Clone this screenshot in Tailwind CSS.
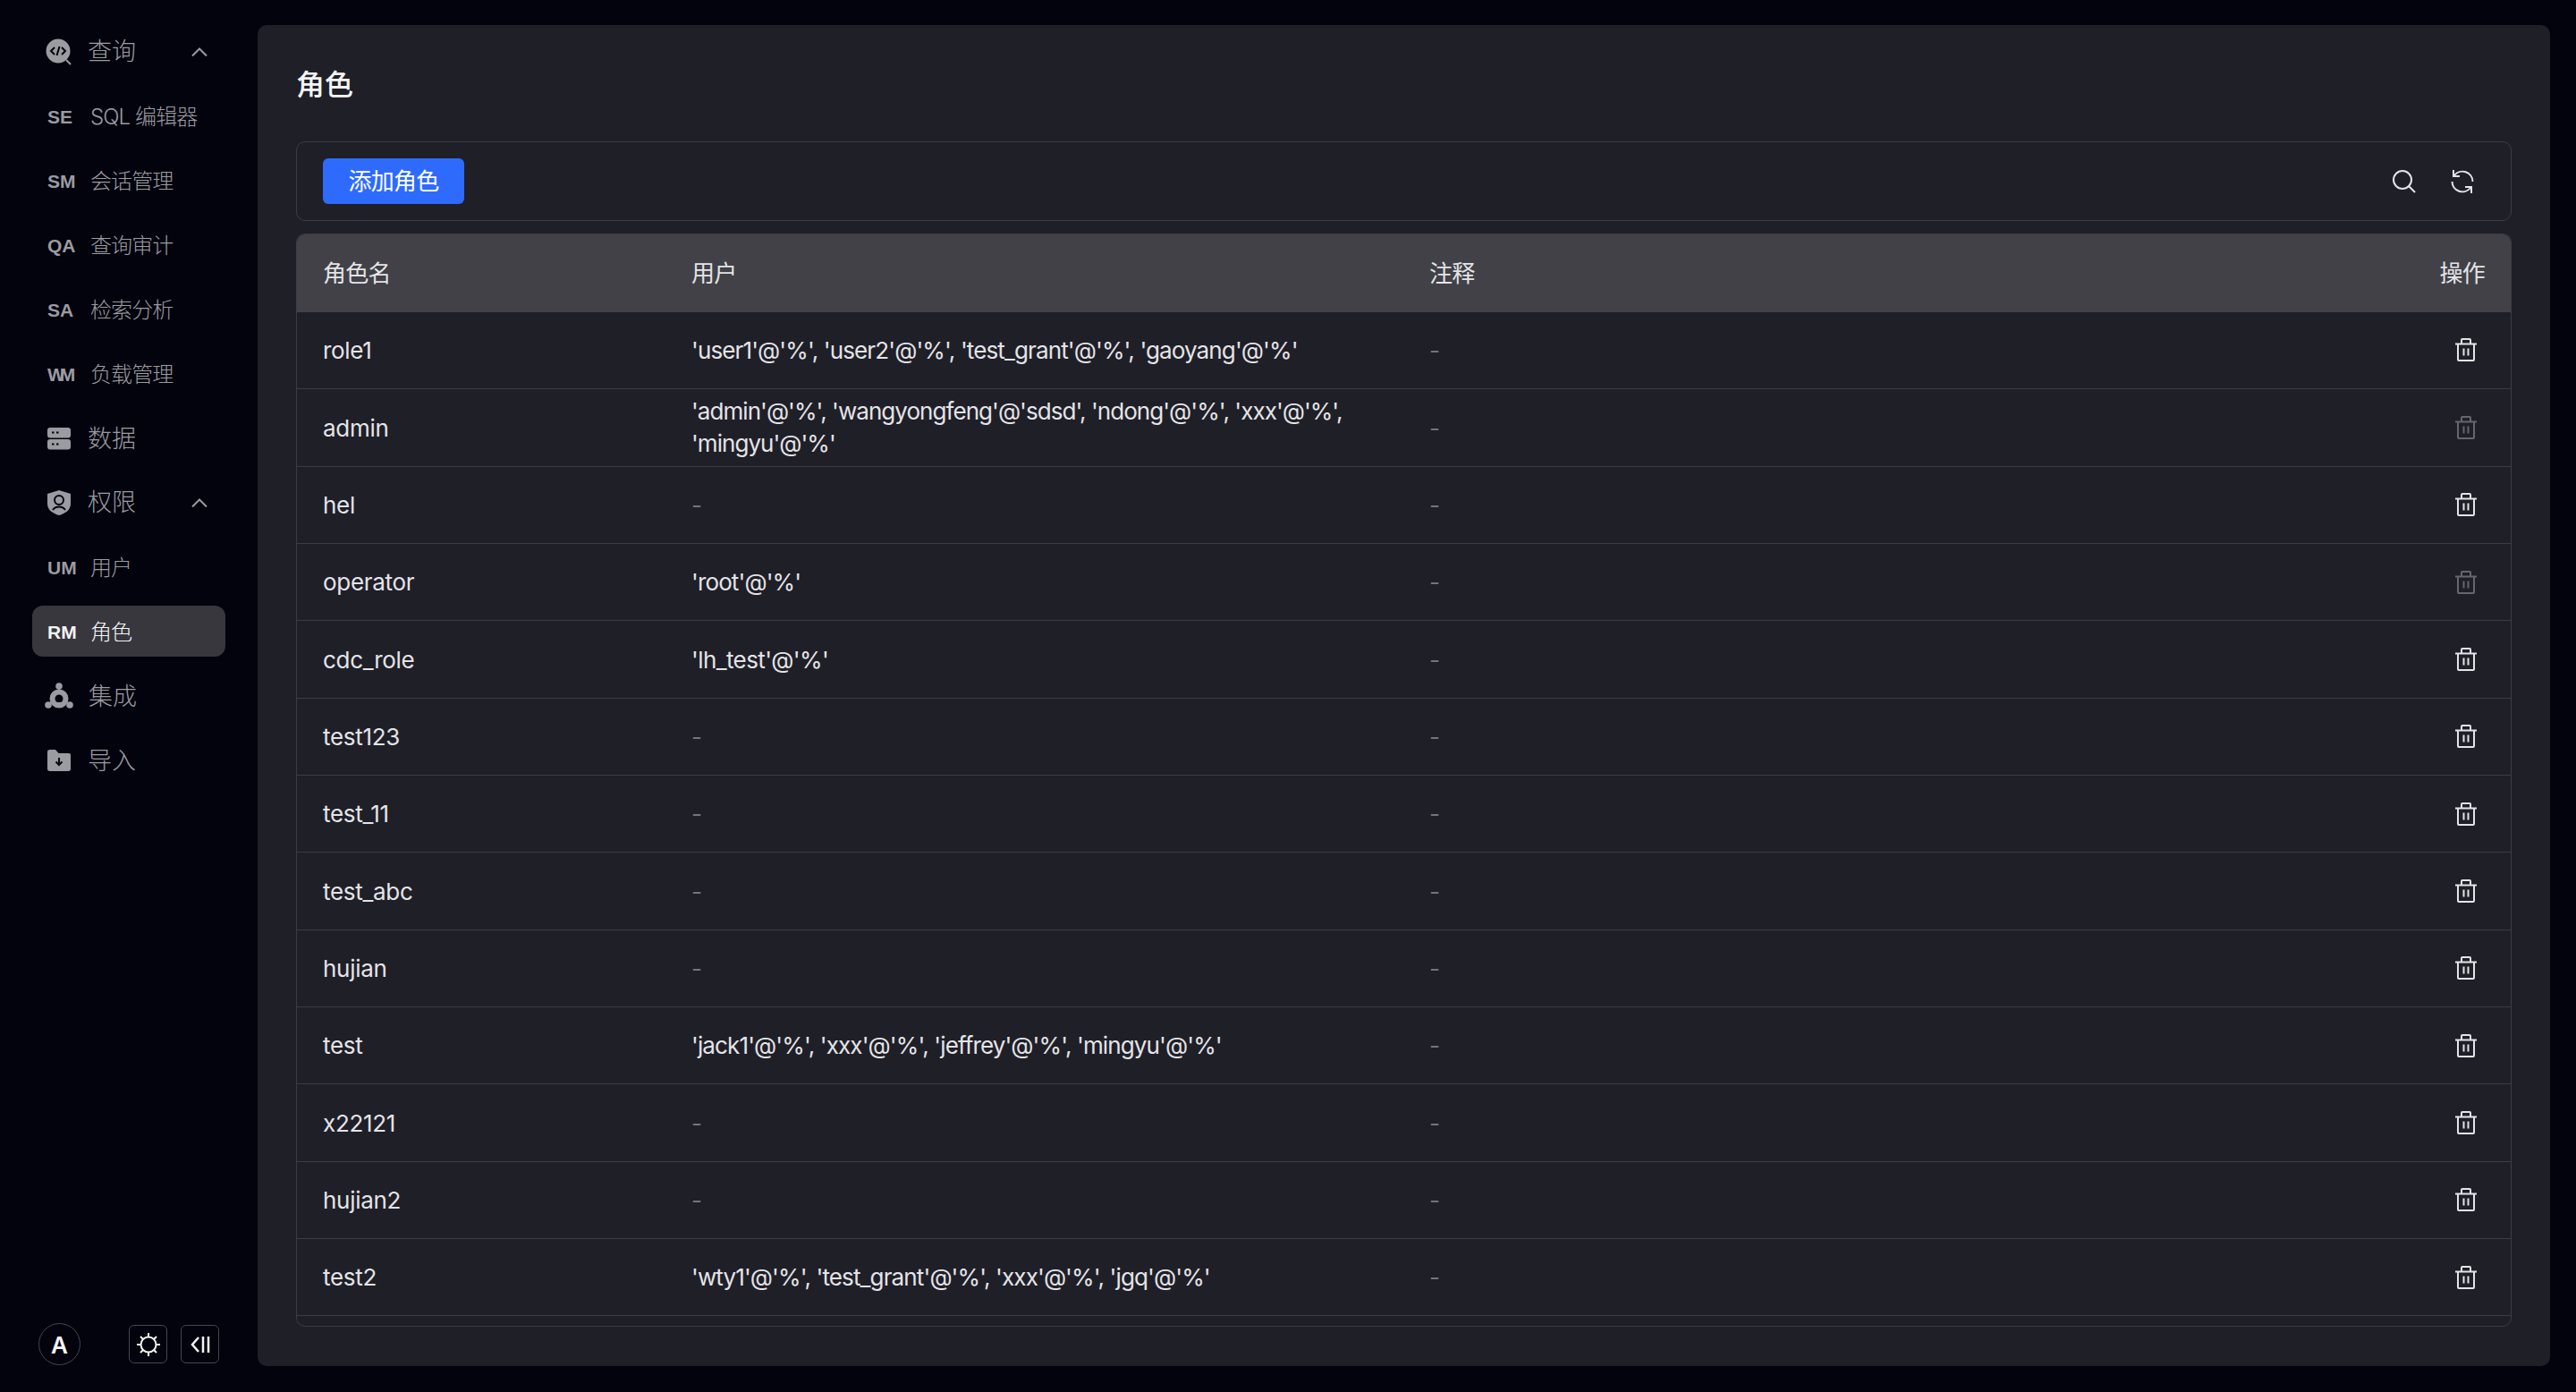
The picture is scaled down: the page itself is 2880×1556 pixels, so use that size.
<!doctype html>
<html lang="zh-CN">
<head>
<meta charset="utf-8">
<script src="https://cdn.jsdelivr.net/npm/@tailwindcss/browser@4"></script>
<title>角色</title>
</head>
<body class="bg-[#03030d] font-['Inter','Noto_Sans_CJK_SC',sans-serif] text-[26px] text-[#e4e4e7] w-[2880px] h-[1556px] overflow-hidden">
<div class="flex h-[1556px]">
  <aside class="w-[288px] shrink-0 pl-[36px] pt-[29px] pb-[30px] flex flex-col justify-between">
    <nav class="w-[216px] flex flex-col gap-[15px] text-[#9b9ba2] font-light">
      <div class="h-[57px] flex items-center pl-[15px] pr-[20px] text-[27px]">
        <svg class="w-[30px] h-[30px] mr-[17px] shrink-0" viewBox="0 0 30 30"><circle cx="14" cy="14" r="13.5" fill="#9b9ba2"/><path d="M23 24l5 5" stroke="#9b9ba2" stroke-width="2"/><path d="M10 10l-4 4 4 4M18 10l4 4-4 4M15.5 9l-3 10" fill="none" stroke="#03030d" stroke-width="2"/></svg>
        <span class="flex-1 pt-[2px]">查询</span>
        <svg class="w-[18px] h-[10px] shrink-0" viewBox="0 0 18 10"><path d="M1 9.5L9 1.5l8 8" fill="none" stroke="#9b9ba2" stroke-width="2"/></svg>
      </div>
      <div class="h-[57px] flex items-center pl-[17px] pt-[2px] text-[24px] tracking-[-0.9px]"><b class="w-[48px] text-[21px] font-bold font-['Liberation_Sans'] tracking-normal">SE</b><span>SQL 编辑器</span></div>
      <div class="h-[57px] flex items-center pl-[17px] pt-[2px] text-[24px] tracking-[-0.9px]"><b class="w-[48px] text-[21px] font-bold font-['Liberation_Sans'] tracking-normal">SM</b><span>会话管理</span></div>
      <div class="h-[57px] flex items-center pl-[17px] pt-[2px] text-[24px] tracking-[-0.9px]"><b class="w-[48px] text-[21px] font-bold font-['Liberation_Sans'] tracking-normal">QA</b><span>查询审计</span></div>
      <div class="h-[57px] flex items-center pl-[17px] pt-[2px] text-[24px] tracking-[-0.9px]"><b class="w-[48px] text-[21px] font-bold font-['Liberation_Sans'] tracking-normal">SA</b><span>检索分析</span></div>
      <div class="h-[57px] flex items-center pl-[17px] pt-[2px] text-[24px] tracking-[-0.9px]"><b class="w-[48px] text-[21px] font-bold font-['Liberation_Sans'] tracking-[-6px]">WM</b><span>负载管理</span></div>
      <div class="h-[57px] flex items-center pl-[17px] text-[27px]">
        <svg class="w-[26px] h-[26px] mr-[19px] shrink-0" viewBox="0 0 26 26"><rect x="0" y="1" width="26" height="11.5" rx="3" fill="#9b9ba2"/><rect x="0" y="14" width="26" height="11.5" rx="3" fill="#9b9ba2"/><path d="M5 6.500h2.500M10 6.500h2.500M5 19.500h2.500M10 19.500h2.500" stroke="#03030d" stroke-width="2"/></svg>
        <span class="pt-[3px]">数据</span>
      </div>
      <div class="h-[57px] flex items-center pl-[17px] pr-[20px] text-[27px]">
        <svg class="w-[26px] h-[28px] mr-[19px] shrink-0" viewBox="0 0 26 28"><path d="M13 0l13 4v11c0 7-6 11-13 13C6 26 0 22 0 15V4z" fill="#9b9ba2"/><circle cx="13" cy="11" r="5" fill="none" stroke="#03030d" stroke-width="2"/><path d="M6 22c2-3 4-3.500 7-3.500s5 .5 7 3.500" fill="none" stroke="#03030d" stroke-width="2"/></svg>
        <span class="flex-1 pt-[2px]">权限</span>
        <svg class="w-[18px] h-[10px] shrink-0" viewBox="0 0 18 10"><path d="M1 9.5L9 1.5l8 8" fill="none" stroke="#9b9ba2" stroke-width="2"/></svg>
      </div>
      <div class="h-[57px] flex items-center pl-[17px] pt-[2px] text-[24px] tracking-[-0.9px]"><b class="w-[48px] text-[21px] font-bold font-['Liberation_Sans'] tracking-normal">UM</b><span>用户</span></div>
      <div class="h-[57px] flex items-center pl-[17px] pt-[2px] text-[24px] tracking-[-0.9px] bg-[#37373d] rounded-[12px] text-[#f4f4f5]"><b class="w-[48px] text-[21px] font-bold font-['Liberation_Sans'] tracking-normal">RM</b><span>角色</span></div>
      <div class="h-[57px] flex items-center pl-[14px] text-[27px]">
        <svg class="w-[32px] h-[30px] mr-[17px] shrink-0" viewBox="0 0 32 30"><circle cx="16" cy="4" r="3.800" fill="#9b9ba2"/><circle cx="4" cy="25" r="3.800" fill="#9b9ba2"/><circle cx="28" cy="25" r="3.800" fill="#9b9ba2"/><path d="M16 7v4M7 23l3-2M25 23l-3-2" stroke="#9b9ba2" stroke-width="2"/><circle cx="16" cy="18" r="7.500" fill="none" stroke="#9b9ba2" stroke-width="6"/><path d="M9 25c3 3 11 3 14 0l-3-3h-8z" fill="#9b9ba2"/></svg>
        <span class="pt-[3px]">集成</span>
      </div>
      <div class="h-[57px] flex items-center pl-[17px] text-[27px]">
        <svg class="w-[26px] h-[24px] mr-[19px] shrink-0" viewBox="0 0 26 24"><path d="M0 2.500C0 1 1 0 2.500 0H9l3.500 4H24c1.200 0 2 .8 2 2v15.500c0 1.500-1 2.500-2.500 2.500h-21C1 24 0 23 0 21.500z" fill="#9b9ba2"/><path d="M13 9v8M9.500 13.500L13 17l3.500-3.500" fill="none" stroke="#03030d" stroke-width="2"/></svg>
        <span class="pt-[3px]">导入</span>
      </div>
    </nav>
    <div class="flex items-center pl-[7px] text-[#f4f4f5]">
      <div class="w-[47px] h-[47px] rounded-full border border-[#45454c] flex items-center justify-center pt-[2px] font-semibold text-[26px] mr-[54px]">A</div>
      <div class="w-[43px] h-[43px] rounded-[6px] border border-[#45454c] flex items-center justify-center mr-[15px]">
        <svg class="w-[26px] h-[26px]" viewBox="0 0 26 26"><circle cx="13" cy="13" r="8.500" fill="none" stroke="#f4f4f5" stroke-width="2"/><path d="M13 0v4M13 22v4M0 13h4M22 13h4M4 4l3 3M19 19l3 3M4 22l3-3M19 7l3-3" stroke="#f4f4f5" stroke-width="2"/></svg>
      </div>
      <div class="w-[43px] h-[43px] rounded-[6px] border border-[#45454c] flex items-center justify-center">
        <svg class="w-[22px] h-[18px]" viewBox="0 0 22 18"><path d="M9 1L2 9l7 8M14 0v18M20 0v18" fill="none" stroke="#f4f4f5" stroke-width="2.500"/></svg>
      </div>
    </div>
  </aside>

  <main class="w-[2563px] h-[1499px] mt-[28px] bg-[#1f1f28] rounded-[10px] px-[43px] pt-[45px]">
    <h1 class="h-[44px] leading-[44px] text-[32px] font-medium text-[#f4f4f5] mb-[41px]">角色</h1>

    <div class="h-[89px] border border-[#3c3c43] rounded-[10px] flex items-center justify-between pl-[29px] pr-[41px] mb-[14px]">
      <button class="w-[158px] h-[51px] bg-[#2e6bfd] rounded-[6px] text-white text-[26px] tracking-[-0.8px] flex items-center justify-center">添加角色</button>
      <div class="flex items-center gap-[39px]">
        <svg class="w-[26px] h-[26px]" viewBox="0 0 26 26"><circle cx="11" cy="11" r="10" fill="none" stroke="#e4e4e7" stroke-width="2"/><path d="M18 18l7 7" stroke="#e4e4e7" stroke-width="2"/></svg>
        <svg class="w-[26px] h-[26px]" viewBox="0 0 26 26"><path d="M4 6A11.500 11.500 0 0 1 24.500 13M22 20A11.500 11.500 0 0 1 1.500 13" fill="none" stroke="#e4e4e7" stroke-width="2"/><path d="M3 0v7h7M23 26v-7h-7" fill="none" stroke="#e4e4e7" stroke-width="2"/></svg>
      </div>
    </div>

    <div class="h-[1222px] border border-[#3c3c43] rounded-[10px] overflow-hidden tracking-[-0.3px]">
      <div class="h-[88px] -mx-px -mt-px bg-[#414147] grid grid-cols-[412px_825px_1fr_120px] items-center tracking-[-0.8px]">
        <div class="pl-[30px]">角色名</div><div class="pl-[30px]">用户</div><div class="pl-[30px]">注释</div><div class="pr-[30px] text-right">操作</div>
      </div>

      <div class="h-[86.35px] border-b border-[#3c3c43] grid grid-cols-[411px_825px_1fr_120px] items-center">
        <div class="pl-[29px]">role1</div><div class="pl-[30px] leading-[36px] tracking-[-0.87px]">'user1'@'%', 'user2'@'%', 'test_grant'@'%', 'gaoyang'@'%'</div><div class="pl-[30px] text-[#74747b]">-</div>
        <div class="pl-[57px] -mt-[2px]"><svg class="w-[26px] h-[26px] text-[#e4e4e7]" viewBox="0 0 26 26"><path d="M1 6.500h24M4 6.500V24c0 .8.500 1 1 1h16c.5 0 1-.2 1-1V6.500M8 6.500V2c0-.6.4-1 1-1h8c.6 0 1 .4 1 1v4.500M10.500 11.500v8M15.500 11.500v8" fill="none" stroke="currentColor" stroke-width="2"/></svg></div>
      </div>
      <div class="h-[86.35px] border-b border-[#3c3c43] grid grid-cols-[411px_825px_1fr_120px] items-center">
        <div class="pl-[29px]">admin</div><div class="pl-[30px] leading-[36px] tracking-[-0.95px]">'admin'@'%', 'wangyongfeng'@'sdsd', 'ndong'@'%', 'xxx'@'%', 'mingyu'@'%'</div><div class="pl-[30px] text-[#74747b]">-</div>
        <div class="pl-[57px]"><svg class="w-[26px] h-[26px] text-[#66666c]" viewBox="0 0 26 26"><path d="M1 6.500h24M4 6.500V24c0 .8.500 1 1 1h16c.5 0 1-.2 1-1V6.500M8 6.500V2c0-.6.4-1 1-1h8c.6 0 1 .4 1 1v4.500M10.500 11.500v8M15.500 11.500v8" fill="none" stroke="currentColor" stroke-width="2"/></svg></div>
      </div>
      <div class="h-[86.35px] border-b border-[#3c3c43] grid grid-cols-[411px_825px_1fr_120px] items-center">
        <div class="pl-[29px]">hel</div><div class="pl-[30px] text-[#74747b]">-</div><div class="pl-[30px] text-[#74747b]">-</div>
        <div class="pl-[57px]"><svg class="w-[26px] h-[26px] text-[#e4e4e7]" viewBox="0 0 26 26"><path d="M1 6.500h24M4 6.500V24c0 .8.500 1 1 1h16c.5 0 1-.2 1-1V6.500M8 6.500V2c0-.6.4-1 1-1h8c.6 0 1 .4 1 1v4.500M10.500 11.500v8M15.500 11.500v8" fill="none" stroke="currentColor" stroke-width="2"/></svg></div>
      </div>
      <div class="h-[86.35px] border-b border-[#3c3c43] grid grid-cols-[411px_825px_1fr_120px] items-center">
        <div class="pl-[29px]">operator</div><div class="pl-[30px] tracking-[-0.87px]">'root'@'%'</div><div class="pl-[30px] text-[#74747b]">-</div>
        <div class="pl-[57px]"><svg class="w-[26px] h-[26px] text-[#66666c]" viewBox="0 0 26 26"><path d="M1 6.500h24M4 6.500V24c0 .8.500 1 1 1h16c.5 0 1-.2 1-1V6.500M8 6.500V2c0-.6.4-1 1-1h8c.6 0 1 .4 1 1v4.500M10.500 11.500v8M15.500 11.500v8" fill="none" stroke="currentColor" stroke-width="2"/></svg></div>
      </div>
      <div class="h-[86.35px] border-b border-[#3c3c43] grid grid-cols-[411px_825px_1fr_120px] items-center">
        <div class="pl-[29px]">cdc_role</div><div class="pl-[30px] tracking-[-0.6px]">'lh_test'@'%'</div><div class="pl-[30px] text-[#74747b]">-</div>
        <div class="pl-[57px]"><svg class="w-[26px] h-[26px] text-[#e4e4e7]" viewBox="0 0 26 26"><path d="M1 6.500h24M4 6.500V24c0 .8.500 1 1 1h16c.5 0 1-.2 1-1V6.500M8 6.500V2c0-.6.4-1 1-1h8c.6 0 1 .4 1 1v4.500M10.500 11.500v8M15.500 11.500v8" fill="none" stroke="currentColor" stroke-width="2"/></svg></div>
      </div>
      <div class="h-[86.35px] border-b border-[#3c3c43] grid grid-cols-[411px_825px_1fr_120px] items-center">
        <div class="pl-[29px]">test123</div><div class="pl-[30px] text-[#74747b]">-</div><div class="pl-[30px] text-[#74747b]">-</div>
        <div class="pl-[57px]"><svg class="w-[26px] h-[26px] text-[#e4e4e7]" viewBox="0 0 26 26"><path d="M1 6.500h24M4 6.500V24c0 .8.500 1 1 1h16c.5 0 1-.2 1-1V6.500M8 6.500V2c0-.6.4-1 1-1h8c.6 0 1 .4 1 1v4.500M10.500 11.500v8M15.500 11.500v8" fill="none" stroke="currentColor" stroke-width="2"/></svg></div>
      </div>
      <div class="h-[86.35px] border-b border-[#3c3c43] grid grid-cols-[411px_825px_1fr_120px] items-center">
        <div class="pl-[29px]">test_11</div><div class="pl-[30px] text-[#74747b]">-</div><div class="pl-[30px] text-[#74747b]">-</div>
        <div class="pl-[57px]"><svg class="w-[26px] h-[26px] text-[#e4e4e7]" viewBox="0 0 26 26"><path d="M1 6.500h24M4 6.500V24c0 .8.500 1 1 1h16c.5 0 1-.2 1-1V6.500M8 6.500V2c0-.6.4-1 1-1h8c.6 0 1 .4 1 1v4.500M10.500 11.500v8M15.500 11.500v8" fill="none" stroke="currentColor" stroke-width="2"/></svg></div>
      </div>
      <div class="h-[86.35px] border-b border-[#3c3c43] grid grid-cols-[411px_825px_1fr_120px] items-center">
        <div class="pl-[29px]">test_abc</div><div class="pl-[30px] text-[#74747b]">-</div><div class="pl-[30px] text-[#74747b]">-</div>
        <div class="pl-[57px]"><svg class="w-[26px] h-[26px] text-[#e4e4e7]" viewBox="0 0 26 26"><path d="M1 6.500h24M4 6.500V24c0 .8.500 1 1 1h16c.5 0 1-.2 1-1V6.500M8 6.500V2c0-.6.4-1 1-1h8c.6 0 1 .4 1 1v4.500M10.500 11.500v8M15.500 11.500v8" fill="none" stroke="currentColor" stroke-width="2"/></svg></div>
      </div>
      <div class="h-[86.35px] border-b border-[#3c3c43] grid grid-cols-[411px_825px_1fr_120px] items-center">
        <div class="pl-[29px]">hujian</div><div class="pl-[30px] text-[#74747b]">-</div><div class="pl-[30px] text-[#74747b]">-</div>
        <div class="pl-[57px]"><svg class="w-[26px] h-[26px] text-[#e4e4e7]" viewBox="0 0 26 26"><path d="M1 6.500h24M4 6.500V24c0 .8.500 1 1 1h16c.5 0 1-.2 1-1V6.500M8 6.500V2c0-.6.4-1 1-1h8c.6 0 1 .4 1 1v4.500M10.500 11.500v8M15.500 11.500v8" fill="none" stroke="currentColor" stroke-width="2"/></svg></div>
      </div>
      <div class="h-[86.35px] border-b border-[#3c3c43] grid grid-cols-[411px_825px_1fr_120px] items-center">
        <div class="pl-[29px]">test</div><div class="pl-[30px] tracking-[-0.87px]">'jack1'@'%', 'xxx'@'%', 'jeffrey'@'%', 'mingyu'@'%'</div><div class="pl-[30px] text-[#74747b]">-</div>
        <div class="pl-[57px]"><svg class="w-[26px] h-[26px] text-[#e4e4e7]" viewBox="0 0 26 26"><path d="M1 6.500h24M4 6.500V24c0 .8.500 1 1 1h16c.5 0 1-.2 1-1V6.500M8 6.500V2c0-.6.4-1 1-1h8c.6 0 1 .4 1 1v4.500M10.500 11.500v8M15.500 11.500v8" fill="none" stroke="currentColor" stroke-width="2"/></svg></div>
      </div>
      <div class="h-[86.35px] border-b border-[#3c3c43] grid grid-cols-[411px_825px_1fr_120px] items-center">
        <div class="pl-[29px]">x22121</div><div class="pl-[30px] text-[#74747b]">-</div><div class="pl-[30px] text-[#74747b]">-</div>
        <div class="pl-[57px]"><svg class="w-[26px] h-[26px] text-[#e4e4e7]" viewBox="0 0 26 26"><path d="M1 6.500h24M4 6.500V24c0 .8.500 1 1 1h16c.5 0 1-.2 1-1V6.500M8 6.500V2c0-.6.4-1 1-1h8c.6 0 1 .4 1 1v4.500M10.500 11.500v8M15.500 11.500v8" fill="none" stroke="currentColor" stroke-width="2"/></svg></div>
      </div>
      <div class="h-[86.35px] border-b border-[#3c3c43] grid grid-cols-[411px_825px_1fr_120px] items-center">
        <div class="pl-[29px]">hujian2</div><div class="pl-[30px] text-[#74747b]">-</div><div class="pl-[30px] text-[#74747b]">-</div>
        <div class="pl-[57px]"><svg class="w-[26px] h-[26px] text-[#e4e4e7]" viewBox="0 0 26 26"><path d="M1 6.500h24M4 6.500V24c0 .8.500 1 1 1h16c.5 0 1-.2 1-1V6.500M8 6.500V2c0-.6.4-1 1-1h8c.6 0 1 .4 1 1v4.500M10.500 11.500v8M15.500 11.500v8" fill="none" stroke="currentColor" stroke-width="2"/></svg></div>
      </div>
      <div class="h-[86.35px] border-b border-[#3c3c43] grid grid-cols-[411px_825px_1fr_120px] items-center">
        <div class="pl-[29px]">test2</div><div class="pl-[30px] tracking-[-0.87px]">'wty1'@'%', 'test_grant'@'%', 'xxx'@'%', 'jgq'@'%'</div><div class="pl-[30px] text-[#74747b]">-</div>
        <div class="pl-[57px]"><svg class="w-[26px] h-[26px] text-[#e4e4e7]" viewBox="0 0 26 26"><path d="M1 6.500h24M4 6.500V24c0 .8.500 1 1 1h16c.5 0 1-.2 1-1V6.500M8 6.500V2c0-.6.4-1 1-1h8c.6 0 1 .4 1 1v4.500M10.500 11.500v8M15.500 11.500v8" fill="none" stroke="currentColor" stroke-width="2"/></svg></div>
      </div>
    </div>
  </main>
</div>
</body>
</html>
